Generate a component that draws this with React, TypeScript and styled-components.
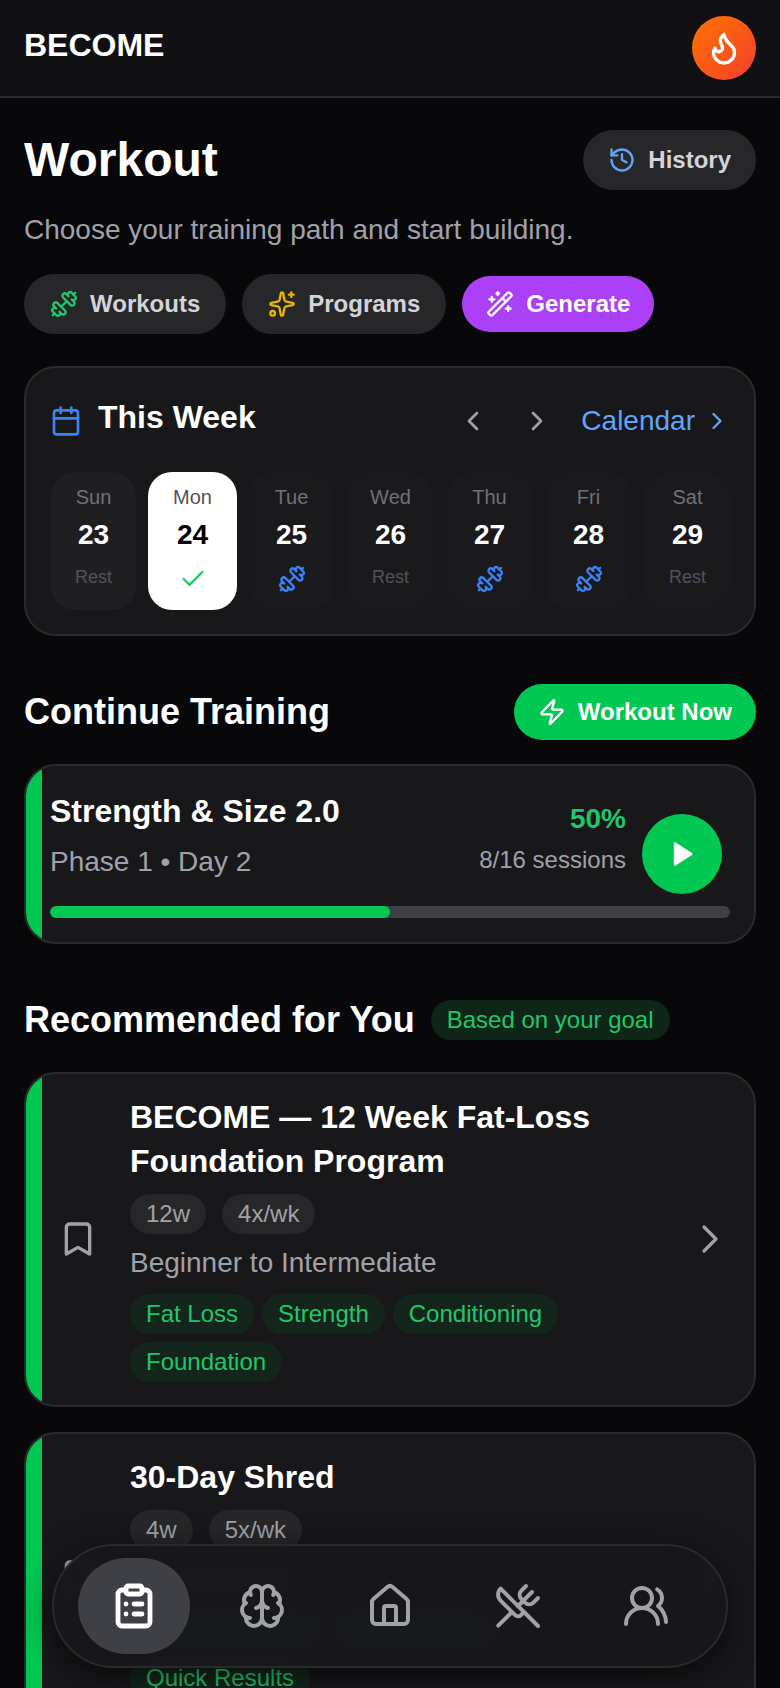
import React from "react";
import styled, { createGlobalStyle } from "styled-components";
import {
  Bookmark, Brain, Calendar, Check, ChevronLeft, ChevronRight, ClipboardList, Dumbbell, Flame,
  History, House, Sparkles, UsersRound, UtensilsCrossed, WandSparkles, Zap,
} from "lucide-react";

const Global = createGlobalStyle`
  html, body { margin: 0; padding: 0; background: #08080a; }
  body { font-family: "Liberation Sans", Arial, sans-serif; color: #fff; width: 780px; height: 1688px; overflow: hidden; }
  * { box-sizing: border-box; }
`;

const Page = styled.div`
  width: 780px;
  height: 1688px;
  overflow: hidden;
  background: #08080a;
`;
const Header = styled.header`
  height: 98px;
  display: flex;
  align-items: flex-start;
  justify-content: space-between;
  padding: 16px 24px 0;
  background: #111114;
  border-bottom: 2px solid #2a2a2d;
`;
const Brand = styled.div`
  font-size: 32px;
  font-weight: 700;
  line-height: 58px;
`;
const Avatar = styled.div`
  width: 64px;
  height: 64px;
  border-radius: 50%;
  display: flex;
  align-items: center;
  justify-content: center;
  background: linear-gradient(135deg, #ff7300, #f43f2e);
  color: #fff;
`;
const Main = styled.main`
  padding: 32px 24px 0;
`;
const TitleRow = styled.div`
  display: flex;
  align-items: center;
  justify-content: space-between;
  height: 60px;
`;
const Title = styled.h1`
  margin: 0;
  font-size: 48px;
  line-height: 56px;
  font-weight: 700;
`;
const Subtitle = styled.p`
  margin: 22px 0 0;
  font-size: 28px;
  line-height: 36px;
  color: #a1a1aa;
`;
const Pill = styled.button`
  display: inline-flex;
  align-items: center;
  gap: 12px;
  height: 60px;
  padding: 0 26px;
  border: 0;
  border-radius: 30px;
  background: #27272a;
  color: #d4d4d8;
  font: 700 24px "Liberation Sans", Arial, sans-serif;
  white-space: nowrap;
`;
const HistoryPill = styled(Pill)`
  padding: 0 25px;
  gap: 12px;
`;
const Tabs = styled.div`
  display: flex;
  align-items: center;
  gap: 16px;
  margin-top: 26px;
`;
const GeneratePill = styled(Pill)`
  height: 56px;
  border-radius: 28px;
  padding: 0 24px;
  background: #ab40f6;
  color: #fff;
`;
const Card = styled.section`
  position: relative;
  border: 2px solid #2a2a2d;
  border-radius: 32px;
  background: #18181b;
  overflow: hidden;
`;
const WeekCard = styled(Card)`
  margin-top: 32px;
  height: 270px;
  padding: 24px 24px 0;
`;
const WeekHead = styled.div`
  display: flex;
  align-items: center;
  height: 56px;
  margin-top: 1px;
`;
const WeekTitle = styled.h2`
  margin: 0 0 8px 16px;
  font-size: 32px;
  line-height: 40px;
  font-weight: 700;
  flex: 1;
`;
const NavIcons = styled.div`
  display: flex;
  align-items: center;
  gap: 32px;
  color: #a1a1aa;
  margin-right: 28px;
`;
const CalendarLink = styled.div`
  display: flex;
  align-items: center;
  gap: 8px;
  font-size: 28px;
  color: #60a5fa;
  margin-right: -1px;
`;
const Days = styled.div`
  display: grid;
  grid-template-columns: repeat(7, 1fr);
  gap: 14px;
  padding-left: 1px;
  margin-top: 23px;
`;
const Day = styled.div<{ $active?: boolean; $lit?: boolean }>`
  height: 138px;
  border-radius: 24px;
  display: flex;
  flex-direction: column;
  align-items: center;
  padding-top: 13px;
  background: ${(p) => (p.$active ? "#fff" : p.$lit ? "#1f1f22" : "#1a1a1d")};
  color: ${(p) => (p.$active ? "#000" : "#fff")};
  ${(p) => p.$active && "margin: 0 -2px;"}
`;
const DayName = styled.div<{ $active?: boolean }>`
  font-size: 20px;
  line-height: 24px;
  color: ${(p) => (p.$active ? "#52525b" : "#71717a")};
`;
const DayNum = styled.div`
  margin-top: 8px;
  font-size: 28px;
  line-height: 36px;
  font-weight: 700;
`;
const DayFoot = styled.div`
  margin-top: 10px;
  height: 32px;
  display: flex;
  align-items: center;
  justify-content: center;
`;
const RestLabel = styled.span`
  margin-bottom: 4px;
  font-size: 18px;
  color: #52525b;
`;
const SectionRow = styled.div<{ $top: number }>`
  display: flex;
  align-items: center;
  justify-content: space-between;
  margin-top: ${(p) => p.$top}px;
  height: 56px;
`;
const SectionTitle = styled.h2`
  margin: 0;
  font-size: 36px;
  line-height: 44px;
  font-weight: 700;
`;
const NowButton = styled.button`
  display: inline-flex;
  align-items: center;
  gap: 12px;
  height: 56px;
  padding: 0 24px;
  border: 0;
  border-radius: 28px;
  background: #00c853;
  color: #fff;
  font: 700 24px "Liberation Sans", Arial, sans-serif;
`;
const Stripe = styled.div`
  position: absolute;
  left: 0;
  top: 0;
  bottom: 0;
  width: 16px;
  background: #00c853;
`;
const ContinueCard = styled(Card)`
  margin-top: 24px;
  height: 180px;
  padding: 23px 24px 0;
`;
const ContinueTop = styled.div`
  display: flex;
  align-items: flex-start;
  justify-content: space-between;
  height: 117px;
`;
const CardTitle = styled.div`
  font-size: 32px;
  line-height: 44px;
  font-weight: 700;
`;
const Muted = styled.div`
  font-size: 28px;
  line-height: 36px;
  color: #a1a1aa;
`;
const PhaseLine = styled(Muted)`
  margin-top: 11px;
`;
const Stats = styled.div`
  display: flex;
  align-items: flex-start;
  gap: 16px;
  margin-right: 8px;
`;
const StatText = styled.div`
  display: flex;
  flex-direction: column;
  align-items: flex-end;
  margin-top: 12px;
`;
const Percent = styled.div`
  font-size: 28px;
  line-height: 36px;
  font-weight: 700;
  color: #22c66a;
`;
const Sessions = styled.div`
  margin-top: 7px;
  font-size: 24px;
  line-height: 32px;
  color: #a1a1aa;
`;
const PlayCircle = styled.div`
  width: 80px;
  height: 80px;
  margin-top: 25px;
  border-radius: 50%;
  background: #00c853;
  display: flex;
  align-items: center;
  justify-content: center;
  color: #fff;
`;
const Track = styled.div`
  height: 12px;
  border-radius: 6px;
  background: #3f3f46;
  overflow: hidden;
`;
const Fill = styled.div`
  height: 100%;
  border-radius: 6px;
  background: #00c853;
`;
const RecHead = styled.div`
  display: flex;
  align-items: center;
  gap: 16px;
  margin-top: 52px;
  height: 48px;
`;
const Badge = styled.span`
  display: inline-flex;
  align-items: center;
  height: 40px;
  padding: 0 16px;
  border-radius: 20px;
  background: #0e2617;
  color: #22c66a;
  font-size: 24px;
`;
const ProgramList = styled.div`
  display: flex;
  flex-direction: column;
  gap: 25px;
  margin-top: 28px;
`;
const ProgramCard = styled(Card)`
  display: flex;
  align-items: center;
  padding: 21px 24px 23px 0;
  flex-shrink: 0;
`;
const BookmarkSlot = styled.div`
  width: 104px;
  flex-shrink: 0;
  display: flex;
  justify-content: flex-end;
  padding-right: 32px;
  color: #a1a1aa;
`;
const ProgramBody = styled.div`
  flex: 1;
  min-width: 0;
`;
const ProgramTitle = styled(CardTitle)`
  max-width: 500px;
`;
const MetaRow = styled.div`
  display: flex;
  gap: 16px;
  margin-top: 11px;
`;
const MetaPill = styled.span`
  display: inline-flex;
  align-items: center;
  height: 40px;
  padding: 0 16px;
  border-radius: 20px;
  background: #27272a;
  color: #a1a1aa;
  font-size: 24px;
`;
const Level = styled(Muted)`
  margin-top: 11px;
`;
const TagRow = styled.div`
  display: flex;
  flex-wrap: wrap;
  gap: 8px;
  margin-top: 13px;
  max-width: 545px;
`;
const Tag = styled.span`
  display: inline-flex;
  align-items: center;
  height: 40px;
  padding: 0 16px;
  border-radius: 20px;
  background: #14261c;
  color: #22c66a;
  font-size: 24px;
`;
const Chevron = styled.div`
  flex-shrink: 0;
  color: #a1a1aa;
  margin-right: -4px;
  display: flex;
`;
const BottomNav = styled.nav`
  position: fixed;
  left: 52px;
  top: 1544px;
  width: 676px;
  height: 124px;
  display: flex;
  align-items: center;
  justify-content: space-between;
  padding: 0 24px;
  border: 2px solid #2a2a2d;
  border-radius: 62px;
  background: rgba(24, 24, 27, 0.97);
  backdrop-filter: blur(3px);
  box-shadow: 0 8px 32px rgba(0, 0, 0, 0.6);
`;
const NavItem = styled.div<{ $active?: boolean }>`
  width: 112px;
  height: 96px;
  border-radius: 48px;
  display: flex;
  align-items: center;
  justify-content: center;
  background: ${(p) => (p.$active ? "#3f3f46" : "transparent")};
  color: ${(p) => (p.$active ? "#fff" : "#a1a1aa")};
`;

const days = [
  { n: "Sun", d: 23, foot: "rest", lit: true },
  { n: "Mon", d: 24, foot: "done", active: true },
  { n: "Tue", d: 25, foot: "train" },
  { n: "Wed", d: 26, foot: "rest" },
  { n: "Thu", d: 27, foot: "train" },
  { n: "Fri", d: 28, foot: "train" },
  { n: "Sat", d: 29, foot: "rest" },
];

const programs = [
  {
    title: "BECOME — 12 Week Fat-Loss Foundation Program",
    meta: ["12w", "4x/wk"],
    level: "Beginner to Intermediate",
    tags: ["Fat Loss", "Strength", "Conditioning", "Foundation"],
  },
  {
    title: "30-Day Shred",
    meta: ["4w", "5x/wk"],
    level: "Intermediate",
    tags: ["Rapid Fat Loss", "Conditioning", "Quick Results"],
  },
];

export default function App() {
  return (
    <Page>
      <Global />
      <Header>
        <Brand>BECOME</Brand>
        <Avatar><Flame size={36} strokeWidth={2.2} /></Avatar>
      </Header>
      <Main>
        <TitleRow>
          <Title>Workout</Title>
          <HistoryPill><History size={28} color="#60a5fa" />History</HistoryPill>
        </TitleRow>
        <Subtitle>Choose your training path and start building.</Subtitle>
        <Tabs>
          <Pill><Dumbbell size={28} color="#22c66a" />Workouts</Pill>
          <Pill><Sparkles size={28} color="#eab308" />Programs</Pill>
          <GeneratePill><WandSparkles size={28} />Generate</GeneratePill>
        </Tabs>
        <WeekCard>
          <WeekHead>
            <Calendar size={32} color="#3b82f6" />
            <WeekTitle>This Week</WeekTitle>
            <NavIcons>
              <ChevronLeft size={32} />
              <ChevronRight size={32} />
            </NavIcons>
            <CalendarLink>Calendar<ChevronRight size={28} /></CalendarLink>
          </WeekHead>
          <Days>
            {days.map((x) => (
              <Day key={x.n} $active={x.active} $lit={x.lit}>
                <DayName $active={x.active}>{x.n}</DayName>
                <DayNum>{x.d}</DayNum>
                <DayFoot>
                  {x.foot === "rest" && <RestLabel>Rest</RestLabel>}
                  {x.foot === "done" && <Check size={28} color="#22c66a" />}
                  {x.foot === "train" && <Dumbbell size={28} color="#3b82f6" />}
                </DayFoot>
              </Day>
            ))}
          </Days>
        </WeekCard>
        <SectionRow $top={48}>
          <SectionTitle>Continue Training</SectionTitle>
          <NowButton><Zap size={28} />Workout Now</NowButton>
        </SectionRow>
        <ContinueCard>
          <Stripe />
          <ContinueTop>
            <div>
              <CardTitle>Strength &amp; Size 2.0</CardTitle>
              <PhaseLine>Phase 1 • Day 2</PhaseLine>
            </div>
            <Stats>
              <StatText>
                <Percent>50%</Percent>
                <Sessions>8/16 sessions</Sessions>
              </StatText>
              <PlayCircle>
                <svg width="28" height="28" viewBox="0 0 24 24" fill="#fff" stroke="#fff" strokeWidth="2" strokeLinejoin="round">
                  <polygon points="6 3 20 12 6 21 6 3" />
                </svg>
              </PlayCircle>
            </Stats>
          </ContinueTop>
          <Track><Fill style={{ width: "50%" }} /></Track>
        </ContinueCard>
        <RecHead>
          <SectionTitle>Recommended for You</SectionTitle>
          <Badge>Based on your goal</Badge>
        </RecHead>
        <ProgramList>
          {programs.map((p) => (
            <ProgramCard key={p.title}>
              <Stripe />
              <BookmarkSlot><Bookmark size={40} /></BookmarkSlot>
              <ProgramBody>
                <ProgramTitle>{p.title}</ProgramTitle>
                <MetaRow>{p.meta.map((m) => <MetaPill key={m}>{m}</MetaPill>)}</MetaRow>
                <Level>{p.level}</Level>
                <TagRow>{p.tags.map((t) => <Tag key={t}>{t}</Tag>)}</TagRow>
              </ProgramBody>
              <Chevron><ChevronRight size={48} strokeWidth={1.6} /></Chevron>
            </ProgramCard>
          ))}
        </ProgramList>
      </Main>
      <BottomNav>
        <NavItem $active><ClipboardList size={48} strokeWidth={2.4} /></NavItem>
        <NavItem><Brain size={48} /></NavItem>
        <NavItem><House size={48} /></NavItem>
        <NavItem><UtensilsCrossed size={48} /></NavItem>
        <NavItem><UsersRound size={48} /></NavItem>
      </BottomNav>
    </Page>
  );
}
